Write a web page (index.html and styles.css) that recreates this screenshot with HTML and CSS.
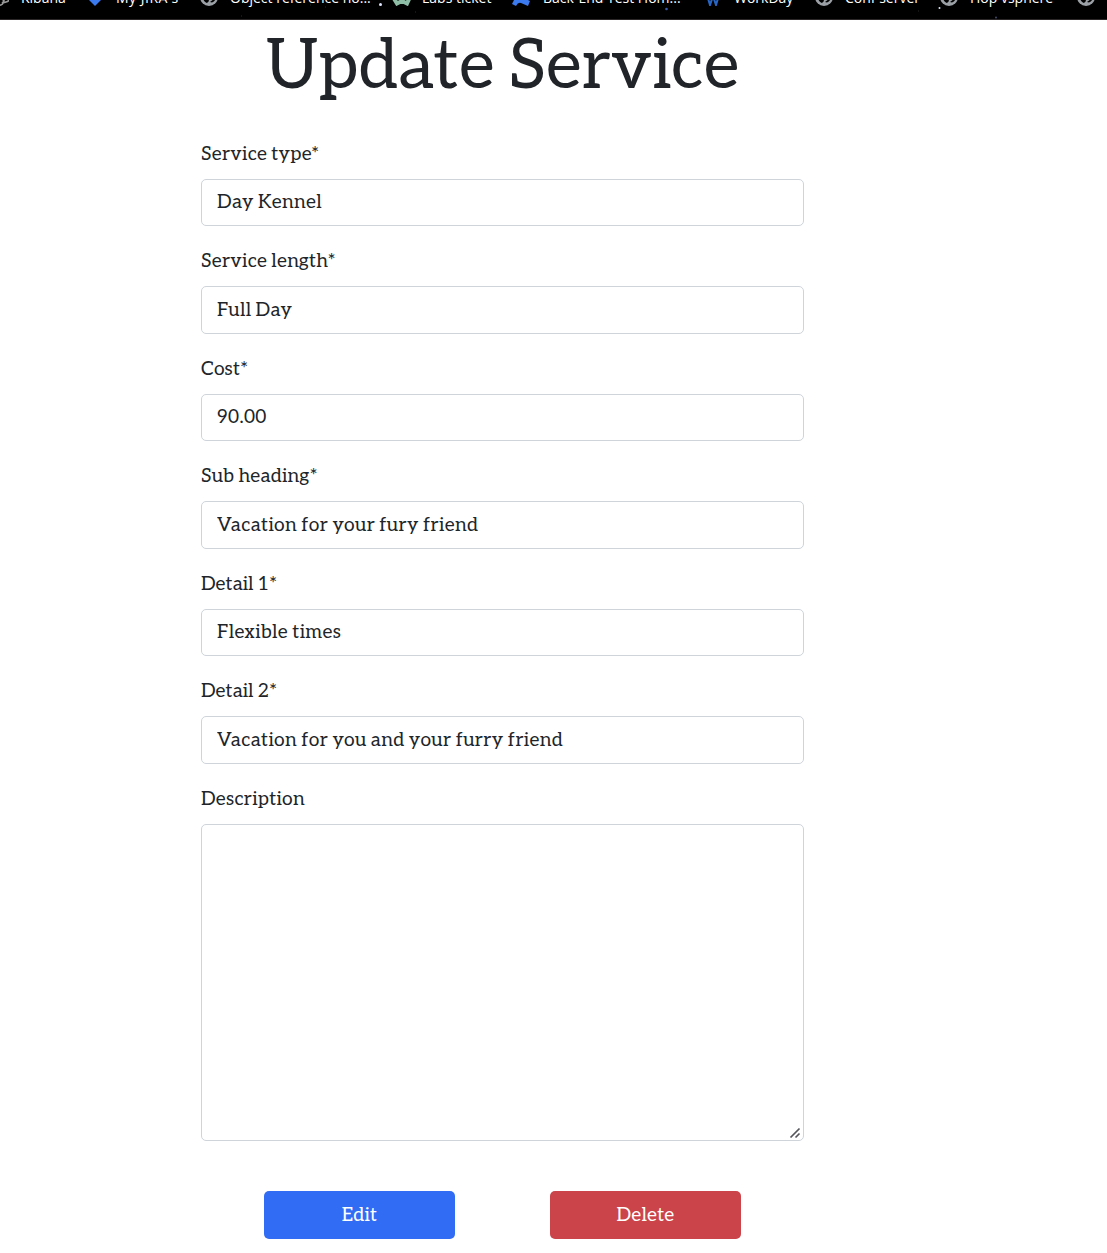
FILE: index.html
```html
<!DOCTYPE html>
<html lang="en">
<head>
<meta charset="utf-8">
<title>Update Service</title>
<link rel="stylesheet" href="styles.css">
</head>
<body>
<svg class="sprite" aria-hidden="true">
  <symbol id="globe" viewBox="0 0 18 18"><circle cx="9" cy="9" r="9" fill="#9aa0a6"/><path d="M4 7l4 3 1 3-2 2C4.500 14 3 12 3 9zM10 14l4-3V7h2c.500 4-1 6-4 7.500z" fill="#000"/></symbol>
</svg>
<nav class="bookmarks">
  <div class="mark m1"><svg class="ico" viewBox="0 0 18 18"><path d="M8 17q4 1 5-5V8M11 12q4-3 6-1t-2 3q-3 1-4 0M17 5l-3 6" fill="none" stroke="#999" stroke-width="1.700"/></svg><span>Kibana</span></div>
  <div class="mark m2"><svg class="ico" viewBox="0 0 18 18"><path d="M9 2l8 8-8 8-8-8z" fill="#3b79ee"/></svg><span class="jira">My JIRA's</span></div>
  <div class="mark m3"><svg class="ico"><use href="#globe"/></svg><span>Object reference no...</span></div>
  <div class="mark m4"><svg class="ico wide" viewBox="0 0 20 18"><path d="M2 9l4 6.500 3-1.500h4l3 1.500L19 9" fill="none" stroke="#8fbea6" stroke-width="4"/></svg><span>Labs ticket</span></div>
  <div class="mark m5"><svg class="ico wide" viewBox="0 0 20 18"><path d="M1 16l3-6q5-4 9 0l6 3-2 5-7-3q-3-1-5 3z" fill="#3b79ee"/></svg><span>Back-End Test Hom...</span></div>
  <div class="mark m6"><svg class="ico" viewBox="0 0 18 18"><path d="M3 7l3 10 3-9 3 9 3-10" fill="none" stroke="#2866c5" stroke-width="2"/></svg><span>WorkDay</span></div>
  <div class="mark m7"><svg class="ico"><use href="#globe"/></svg><span>Conf server</span></div>
  <div class="mark m8"><svg class="ico"><use href="#globe"/></svg><span>Hop vsphere</span></div>
  <div class="mark m9"><svg class="ico"><use href="#globe"/></svg><span>C</span></div>
  <svg class="stars" viewBox="0 0 1107 20"><g fill="#dfe5ff"><circle cx="380.500" cy="4.500" r="1.500"/><circle cx="939.500" cy="8" r="1"/></g><circle cx="666.500" cy="9" r="1.300" fill="#3b5bb0"/><circle cx="996" cy="17.500" r="1" fill="#444a68"/><path d="M241 16h1M310 5h1M325 7h1M415 12h1M918 11h1" stroke="#292929"/></svg>
</nav>
<main class="page">
  <h1 class="title">Update Service</h1>
  <form class="form">
    <label class="field"><span class="label">Service type*</span><input class="control" value="Day Kennel"></label>
    <label class="field"><span class="label">Service length*</span><input class="control low" value="Full Day"></label>
    <label class="field"><span class="label tight">Cost*</span><input class="control" value="90.00"></label>
    <label class="field"><span class="label">Sub heading*</span><input class="control low" value="Vacation for your fury friend"></label>
    <label class="field"><span class="label tight">Detail 1*</span><input class="control" value="Flexible times"></label>
    <label class="field"><span class="label tight">Detail 2*</span><input class="control low" value="Vacation for you and your furry friend"></label>
    <label class="field area"><span class="label">Description</span><textarea class="control"></textarea><svg class="grip" viewBox="0 0 12 12"><path d="M1.500 10.500L10.500 1.500M6.500 10.500L10.500 6.500" stroke="#55555c" stroke-width="1.700"/></svg></label>
    <div class="actions"><button type="button" class="btn edit">Edit</button><button type="button" class="btn delete">Delete</button></div>
  </form>
</main>
</body>
</html>
```
FILE: styles.css
```css
* { box-sizing: border-box; }
body { margin: 0; background: #fff; color: #212529; font: 19.2px/30px "Aleo", "DejaVu Serif Condensed", "DejaVu Serif", serif; letter-spacing: .4px; word-spacing: -1.2px; height: 1253px; overflow: hidden; }
.sprite { position: absolute; width: 0; height: 0; }
.bookmarks { position: relative; display: flex; height: 20px; background: #000; border-bottom: 1px solid #2b2729; overflow: hidden; color: #fff; font: 14px/20px "Open Sans", sans-serif; letter-spacing: 0; word-spacing: 0; }
.mark { display: flex; flex: none; gap: 12px; margin-top: -12px; height: 20px; white-space: nowrap; }
.ico { width: 18px; height: 18px; flex: none; }
.wide { width: 20px; }
.jira { letter-spacing: .5px; }
.m1 { width: 95px; margin-left: -9px; }
.m2 { width: 114px; }
.m3 { width: 191px; }
.m4 { width: 120px; gap: 11px; }
.m5 { width: 193px; }
.m6 { width: 111px; }
.m7 { width: 125px; }
.m8 { width: 137px; }
.stars { position: absolute; left: 0; top: 0; width: 1107px; height: 20px; }
.page { width: 603px; margin-left: 201px; }
.title { margin: 0; padding-top: 4px; height: 117.9px; font-size: 69.1px; line-height: 85px; font-weight: 400; letter-spacing: 0; word-spacing: -4px; text-align: center; white-space: nowrap; }
.field { display: flex; flex-direction: column; position: relative; height: 107.5px; }
.label { height: 41px; line-height: 34px; letter-spacing: .3px; }
.tight { letter-spacing: .1px; }
.control { display: block; width: 603px; height: 47.5px; margin: 0; padding: 0 15px 1px; border: 1px solid #ced4da; border-radius: 5px; background: #fff; color: #212529; font: inherit; letter-spacing: inherit; word-spacing: inherit; outline: 0; }
.low { padding: 1px 15px 0; }
.area { height: 358px; }
.area .control { height: 317px; resize: none; }
.grip { position: absolute; right: 3px; bottom: 2px; width: 12px; height: 12px; }
.actions { display: flex; gap: 95px; margin: 50px 0 0 63px; }
.btn { width: 191px; height: 48px; padding: 2px 0 0; border: 0; border-radius: 5px; color: #fff; font: inherit; letter-spacing: .25px; }
.edit { background: #316cf4; }
.delete { background: #cb444a; }
```
